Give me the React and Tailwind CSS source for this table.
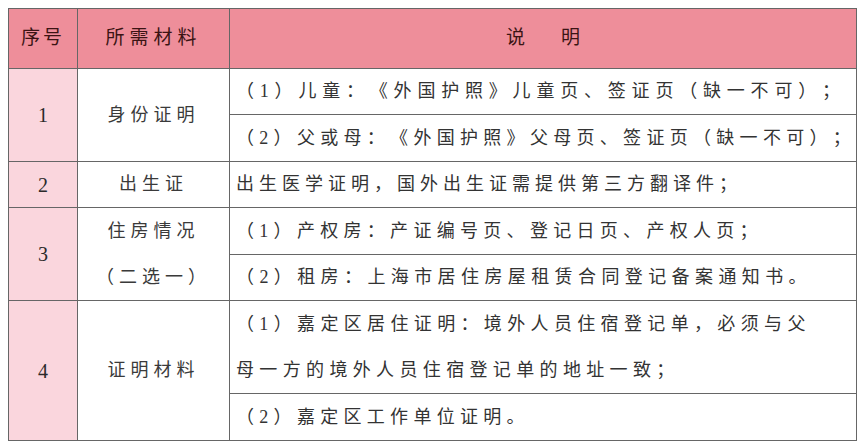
import React from "react";

const font = { fontFamily: '"Liberation Serif", "Noto Sans CJK SC", serif' };

export default function App() {
  const b = "border border-[#666]";
  const body = "text-[18px] text-[#333] text-left pl-[6px] whitespace-nowrap";
  const numCell = `${b} bg-[#fad6dd] text-center text-[20px] text-[#2a2a2a]`;
  const midCell = `${b} bg-white text-center text-[18px] tracking-[5px] text-[#3a3a3a]`;
  return (
    <div className="w-[864px] h-[446px] bg-white pt-[8px] pl-[8px] [text-spacing-trim:space-all]" style={font}>
      <table className="table-fixed border-collapse w-[848px]">
        <colgroup>
          <col className="w-[69px]" />
          <col className="w-[152px]" />
          <col className="w-[627px]" />
        </colgroup>
        <tbody>
          <tr className="h-[60px] bg-[#ee8e9a] text-[#3b1414] text-[19px]">
            <td className={`${b} text-center tracking-[3px]`}>序号</td>
            <td className={`${b} text-center tracking-[5px]`}>所需材料</td>
            <td className={`${b} text-center pl-[36px]`}>
              <span className="tracking-[36px]">说明</span>
            </td>
          </tr>
          <tr className="h-[46px]">
            <td rowSpan={2} className={numCell}>1</td>
            <td rowSpan={2} className={midCell}>身份证明</td>
            <td className={`${b} ${body} tracking-[5.8px]`}>（1）儿童：《外国护照》儿童页、签证页（缺一不可）；</td>
          </tr>
          <tr className="h-[47px]">
            <td className={`${b} ${body} tracking-[5.3px]`}>（2）父或母：《外国护照》父母页、签证页（缺一不可）；</td>
          </tr>
          <tr className="h-[46px]">
            <td className={numCell}>2</td>
            <td className={midCell}>出生证</td>
            <td className={`${b} ${body} tracking-[5px]`}>出生医学证明，国外出生证需提供第三方翻译件；</td>
          </tr>
          <tr className="h-[46px]">
            <td rowSpan={2} className={numCell}>3</td>
            <td rowSpan={2} className={`${midCell} leading-[46px]`}>
              住房情况
              <br />
              （二选一）
            </td>
            <td className={`${b} ${body} tracking-[5.3px]`}>（1）产权房：产证编号页、登记日页、产权人页；</td>
          </tr>
          <tr className="h-[45px]">
            <td className={`${b} ${body} tracking-[5.4px]`}>（2）租房：上海市居住房屋租赁合同登记备案通知书。</td>
          </tr>
          <tr className="h-[92px]">
            <td rowSpan={2} className={numCell}>4</td>
            <td rowSpan={2} className={midCell}>证明材料</td>
            <td className={`${b} ${body} tracking-[5.35px] leading-[46px]`}>
              （1）嘉定区居住证明：境外人员住宿登记单，必须与父
              <br />
              母一方的境外人员住宿登记单的地址一致；
            </td>
          </tr>
          <tr className="h-[47px]">
            <td className={`${b} ${body} tracking-[5.3px]`}>（2）嘉定区工作单位证明。</td>
          </tr>
        </tbody>
      </table>
    </div>
  );
}
